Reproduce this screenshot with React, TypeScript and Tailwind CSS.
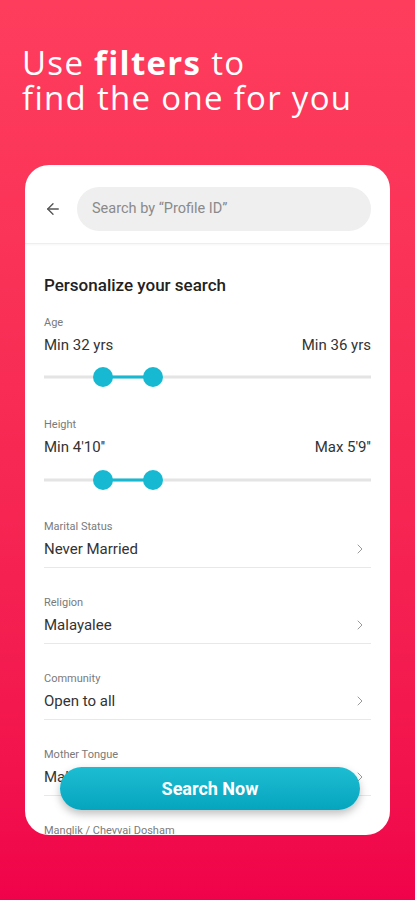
import { ArrowLeft, ChevronRight } from 'lucide-react';

const LISTS = [
  { label: 'Marital Status', value: 'Never Married' },
  { label: 'Religion', value: 'Malayalee' },
  { label: 'Community', value: 'Open to all' },
  { label: 'Mother Tongue', value: 'Malayalam' },
  { label: 'Manglik / Chevvai Dosham', value: "Doesn't matter" },
];

function RangeSlider({ from, to }: { from: number; to: number }) {
  return (
    <div className="relative h-6">
      <div className="absolute left-0 right-0 top-1/2 h-[3px] -translate-y-1/2 bg-[#e4e4e4]" />
      <div
        className="absolute top-1/2 h-[3px] -translate-y-1/2 bg-[#17b9d2]"
        style={{ left: `${from}%`, width: `${to - from}%` }}
      />
      {[from, to].map((p) => (
        <div
          key={p}
          className="absolute top-1/2 h-5 w-5 -translate-x-1/2 -translate-y-1/2 rounded-full bg-[#17b9d2]"
          style={{ left: `${p}%` }}
        />
      ))}
    </div>
  );
}

function RangeBlock({ label, min, max }: { label: string; min: string; max: string }) {
  return (
    <div>
      <p className="text-[11px] leading-4 text-[#7a7a7a]">{label}</p>
      <div className="mt-1 flex justify-between text-[15px] leading-5 text-[#333]">
        <span>{min}</span>
        <span>{max}</span>
      </div>
    </div>
  );
}

export default function App() {
  return (
    <div
      className="h-[900px] w-[415px] overflow-hidden bg-gradient-to-b from-[#fe3d5d] to-[#f0024a]"
      style={{ fontFamily: 'Roboto, "Noto Sans", sans-serif' }}
    >
      <h1
        className="px-[22px] pt-[45px] text-[33px] leading-[35px] font-normal tracking-[1.3px] text-white"
        style={{ fontFamily: '"Open Sans", "Noto Sans", sans-serif' }}
      >
        <span className="block">
          Use <b className="font-bold">filters</b> to
        </span>
        <span className="block">find the one for you</span>
      </h1>

      <div className="relative mx-[25px] mt-[50px] h-[670px] overflow-hidden rounded-[24px] bg-white">
        <div className="flex items-center border-b border-[#eeeeee] pt-[22px] pb-3 pl-[19px] pr-[19px] shadow-[0_1px_2px_rgba(0,0,0,0.04)]">
          <ArrowLeft className="h-[18px] w-[18px] text-[#555]" strokeWidth={1.8} />
          <div className="ml-[15px] flex h-[44px] flex-1 items-center rounded-full bg-[#efefef] pl-[15px] text-[14.5px] text-[#8a8a8a]">
            Search by “Profile ID”
          </div>
        </div>

        <div className="px-[19px]">
          <p className="mt-[29px] text-[17px] leading-6 font-medium text-[#222]">Personalize your search</p>

          <div className="mt-[18px]">
            <RangeBlock label="Age" min="Min 32 yrs" max="Min 36 yrs" />
            <div className="mt-[10px]">
              <RangeSlider from={18} to={33.2} />
            </div>
          </div>

          <div className="mt-[28px]">
            <RangeBlock label="Height" min="Min 4'10''" max="Max 5'9''" />
            <div className="mt-[11px]">
              <RangeSlider from={18} to={33.2} />
            </div>
          </div>

          {LISTS.map((item) => (
            <div key={item.label} className="mt-[27px] border-b border-[#e8e8e8] pb-2">
              <p className="text-[11px] leading-4 text-[#7a7a7a]">{item.label}</p>
              <div className="mt-1 flex items-center justify-between">
                <span className="text-[15px] leading-5 text-[#333]">{item.value}</span>
                <ChevronRight className="mr-[3px] h-4 w-4 text-[#9a9a9a]" strokeWidth={1.5} />
              </div>
            </div>
          ))}
        </div>

        <button className="absolute bottom-[25px] left-[35px] right-[30px] h-[43px] rounded-full bg-gradient-to-b from-[#1cbdd3] to-[#05a5bf] text-[18px] font-bold text-white shadow-[0_4px_8px_rgba(0,0,0,0.25)]">
          Search Now
        </button>
      </div>
    </div>
  );
}
